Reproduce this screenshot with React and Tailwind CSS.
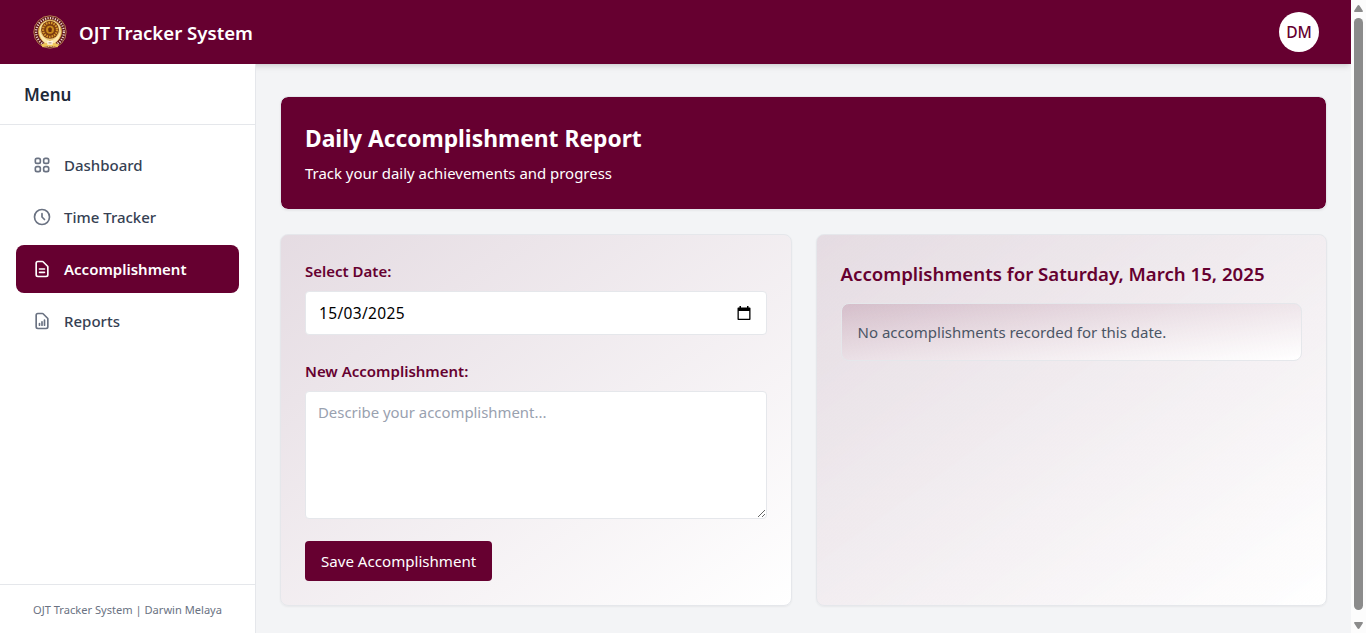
import {
  HiOutlineViewGrid,
  HiOutlineClock,
  HiOutlineDocumentText,
  HiOutlineDocumentReport,
} from 'react-icons/hi';

const menu = [
  { label: 'Dashboard', icon: HiOutlineViewGrid },
  { label: 'Time Tracker', icon: HiOutlineClock },
  { label: 'Accomplishment', icon: HiOutlineDocumentText, active: true },
  { label: 'Reports', icon: HiOutlineDocumentReport },
];

function Seal() {
  return (
    <svg viewBox="0 0 36 36" className="size-9" aria-hidden="true">
      <circle cx="18" cy="18" r="16.2" fill="#5c1018" stroke="#c9955a" strokeWidth="0.8" />
      <circle cx="18" cy="18" r="13.9" fill="none" stroke="#ecd6cb" strokeWidth="2.2" strokeDasharray="1.2 1.3" />
      <circle cx="18" cy="17.500" r="11.700" fill="#f7dc95" stroke="#b98228" strokeWidth="0.7" />
      <circle cx="18" cy="15.800" r="9" fill="#7d3c10" />
      <circle cx="18" cy="15.800" r="7" fill="none" stroke="#d99a2a" strokeWidth="2.200" strokeDasharray="1.500 1.100" />
      <circle cx="18" cy="15.800" r="4" fill="#c98a1c" />
      <path d="M18 13l2 1.800-.7 3.200h-2.600l-.7-3.200z" fill="#6b2c0c" />
      <path d="M7.200 14c-1.500 8 3 15 9.300 17l1.500-5c-4.500-.5-8.800-4-10.800-12z" fill="#fbe7ac" stroke="#d9a63a" strokeWidth="0.500" />
      <path d="M28.800 14c1.500 8-3 15-9.300 17L18 26c4.500-.5 8.800-4 10.800-12z" fill="#fbe7ac" stroke="#d9a63a" strokeWidth="0.500" />
      <path d="M9 30.500l4-1.500h10l4 1.500-1.500 2.700-3.500-.7h-8l-3.500.7z" fill="#efc75a" />
      <path d="M15.300 27h5.400v3.800h-5.400z" fill="#fff6e0" />
      <path d="M16.500 28.200h3v1.300h-3z" fill="#b9a08a" />
    </svg>
  );
}

function CalendarIcon() {
  return (
    <svg viewBox="0 0 14 15" className="h-[15px] w-[14px]" fill="#000" aria-hidden="true">
      <path d="M2.500 0H4v1.500h6V0h1.500v1.500h1.200c.5 0 .8.300.8.800v11c0 .500-.300.800-.800.800H1.300c-.500 0-.800-.300-.800-.800v-11c0-.500.300-.800.800-.800h1.200zM1.800 5v7.800h10.400V5z" />
    </svg>
  );
}

function Header() {
  return (
    <header className="z-10 flex h-16 shrink-0 items-center justify-between bg-[#660030] px-8 shadow-md">
      <div className="flex items-center gap-[11px] text-white">
        <Seal />
        <h1 className="pt-0.5 text-[18.6px] leading-7 font-semibold">OJT Tracker System</h1>
      </div>
      <div className="flex size-10 items-center justify-center rounded-full bg-white pt-0.5 text-[15.6px] font-medium text-[#660030]">
        DM
      </div>
    </header>
  );
}

function Sidebar() {
  return (
    <aside className="z-20 flex w-64 shrink-0 flex-col border-r border-gray-200 bg-white">
      <div className="border-b border-gray-200 px-6 pt-[17px] pb-[15px]">
        <h2 className="text-[17px] leading-7 font-semibold text-gray-800">Menu</h2>
      </div>
      <nav className="flex flex-1 flex-col gap-1 p-4">
        {menu.map(({ label, icon: Icon, active }) => (
          <a
            key={label}
            className={
              active
                ? 'flex h-12 items-center gap-3 rounded-lg bg-[#660030] px-4 text-[15px] font-semibold text-white'
                : 'flex h-12 items-center gap-3 rounded-lg px-4 text-[15px] font-medium text-gray-700'
            }
          >
            <Icon className={active ? 'size-5 text-white' : 'size-5 text-gray-500'} />
            {label}
          </a>
        ))}
      </nav>
      <div className="border-t border-gray-200 px-4 pt-[17px] pb-[15px] text-center text-[11.1px] leading-4 text-gray-500">
        OJT Tracker System | Darwin Melaya
      </div>
    </aside>
  );
}

function EntryForm() {
  return (
    <section className="rounded-lg border border-gray-200 bg-linear-to-br/srgb from-[#660030]/10 to-white p-6 shadow-xs">
      <label className="mb-2 block text-[15px] leading-6 font-semibold text-[#660030]">Select Date:</label>
      <div className="mb-6 flex h-11 items-center justify-between rounded border border-gray-200 bg-white pr-[15px] pl-[13px]">
        <span className="pt-px text-[15.5px] tracking-[0.35px] text-black">15/03/2025</span>
        <CalendarIcon />
      </div>
      <label className="mb-2 block text-[15px] leading-6 font-semibold text-[#660030]">New Accomplishment:</label>
      <textarea
        placeholder="Describe your accomplishment..."
        className="mb-[22px] block h-32 w-full rounded border border-gray-200 bg-white px-3 py-2 text-[14.9px] leading-6 placeholder:text-gray-400"
      />
      <button className="flex h-10 items-center rounded bg-[#660030] px-4 text-[15.1px] text-white">
        Save Accomplishment
      </button>
    </section>
  );
}

function DayList() {
  return (
    <section className="rounded-lg border border-gray-200 bg-linear-to-br/srgb from-[#660030]/10 to-white p-6 shadow-xs">
      <h3 className="mb-[15px] pt-px text-[18.65px] leading-7 font-semibold text-[#660030]">
        Accomplishments for Saturday, March 15, 2025
      </h3>
      <p className="rounded-lg border border-gray-200 bg-linear-to-br/srgb from-[#660030]/15 to-white p-4 text-[15px] leading-6 text-gray-600">
        No accomplishments recorded for this date.
      </p>
    </section>
  );
}

function ScrollRail() {
  return (
    <div className="flex w-[15px] shrink-0 flex-col items-center justify-between bg-[#fcfcfc] pt-[5px] pb-1">
      <svg viewBox="0 0 9 7" className="h-[7px] w-[9px]" fill="#8b8b8b" aria-hidden="true">
        <path d="M4.500 0c.4 0 .7.200.9.500L8.800 5.700c.400.600 0 1.300-.700 1.300H.9C.2 7-.2 6.300.2 5.700L3.600.500C3.800.200 4.100 0 4.500 0z" />
      </svg>
      <div className="mt-1.5 mb-3 w-[9px] flex-1 rounded-full bg-[#8b8b8b]" />
      <svg viewBox="0 0 9 7" className="h-[7px] w-[9px] rotate-180" fill="#8b8b8b" aria-hidden="true">
        <path d="M4.500 0c.4 0 .7.200.9.500L8.800 5.700c.400.600 0 1.300-.700 1.300H.9C.2 7-.2 6.300.2 5.700L3.600.500C3.800.200 4.100 0 4.500 0z" />
      </svg>
    </div>
  );
}

export default function App() {
  return (
    <div className="flex h-screen overflow-hidden font-['Noto_Sans','Open_Sans',sans-serif]">
      <div className="flex min-w-0 flex-1 flex-col overflow-hidden bg-gray-100">
        <Header />
        <div className="flex min-h-0 flex-1">
          <Sidebar />
          <main className="flex min-w-0 flex-1 flex-col gap-6 px-6 pt-8">
            <section className="rounded-lg border border-gray-200 bg-[#660030] bg-clip-padding p-6 text-white shadow-xs">
              <h2 className="pt-0.5 text-[22.8px] leading-8 font-bold">Daily Accomplishment Report</h2>
              <p className="mt-1.5 text-[14.95px] leading-6">Track your daily achievements and progress</p>
            </section>
            <div className="grid grid-cols-2 gap-6">
              <EntryForm />
              <DayList />
            </div>
          </main>
        </div>
      </div>
      <ScrollRail />
    </div>
  );
}
